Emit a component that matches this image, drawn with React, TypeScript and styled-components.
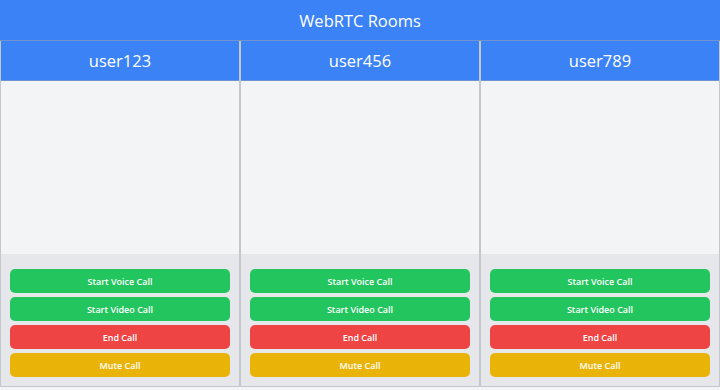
import React from "react";
import styled, { createGlobalStyle } from "styled-components";

const GlobalStyle = createGlobalStyle`
  body {
    margin: 0;
    background: #f3f4f6;
    font-family: "Open Sans", "Noto Sans", Arial, sans-serif;
  }
  * {
    box-sizing: border-box;
  }
`;

const Page = styled.div`
  width: 720px;
  height: 390px;
  overflow: hidden;
  display: flex;
  flex-flow: column;
`;

const Header = styled.header`
  height: 41px;
  background: #3b82f6;
  color: #fff;
  border-bottom: 1px solid rgba(156, 163, 175, 0.55);
  display: flex;
  align-items: center;
  justify-content: center;
  font-size: 16.5px;
`;

const Rooms = styled.div`
  display: grid;
  grid-template-columns: repeat(3, 1fr);
`;

const Room = styled.section`
  display: flex;
  flex-flow: column;
  border: 1px solid rgba(156, 163, 175, 0.55);
  border-top: none;
`;

const UserName = styled.h2`
  margin: 0;
  height: 40px;
  background: #3b82f6;
  color: #fff;
  font-size: 16.5px;
  font-weight: 400;
  display: flex;
  align-items: center;
  justify-content: center;
  border-bottom: 1px solid rgba(156, 163, 175, 0.55);
`;

const VideoArea = styled.div`
  height: 173px;
  background: #f3f4f6;
`;

const Controls = styled.div`
  display: flex;
  flex-flow: column;
  gap: 4px;
  padding: 15px 9px 9px;
  background: #e5e7eb;
`;

const colors = {
  green: "#22c55e",
  red: "#ef4444",
  yellow: "#eab308",
};

const Button = styled.button<{ $color: keyof typeof colors }>`
  height: 24px;
  border: none;
  border-radius: 5px;
  background: ${(p) => colors[p.$color]};
  color: #fff;
  font-family: inherit;
  font-size: 9px;
  font-weight: 600;
  cursor: pointer;
`;

const users = ["user123", "user456", "user789"];

export default function App() {
  return (
    <Page>
      <GlobalStyle />
      <Header>WebRTC Rooms</Header>
      <Rooms>
        {users.map((u) => (
          <Room key={u}>
            <UserName>{u}</UserName>
            <VideoArea />
            <Controls>
              <Button $color="green">Start Voice Call</Button>
              <Button $color="green">Start Video Call</Button>
              <Button $color="red">End Call</Button>
              <Button $color="yellow">Mute Call</Button>
            </Controls>
          </Room>
        ))}
      </Rooms>
    </Page>
  );
}
